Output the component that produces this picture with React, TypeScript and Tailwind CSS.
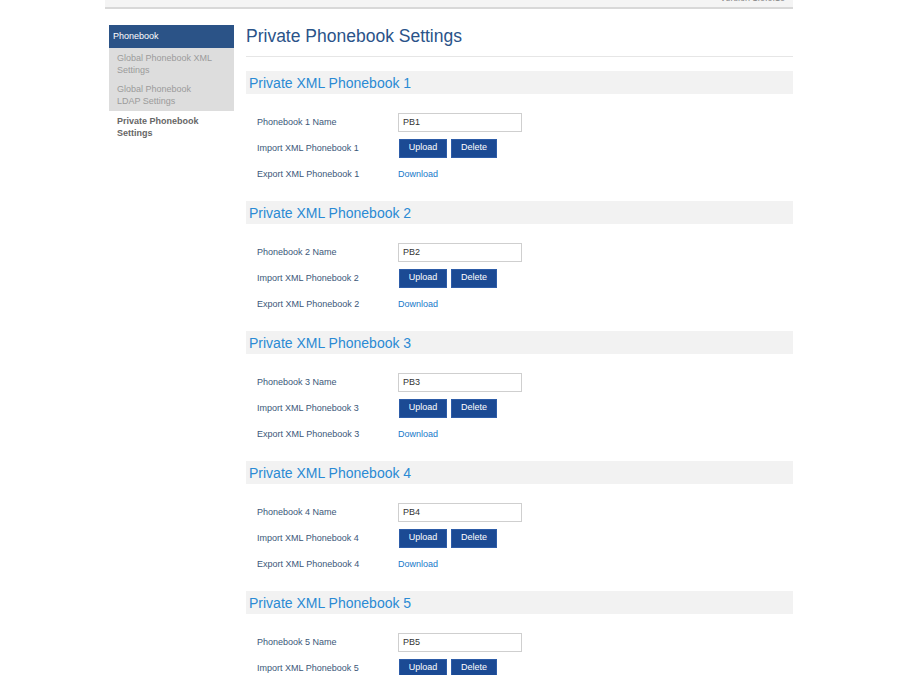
import React from 'react'

const books = [1, 2, 3, 4, 5]

function Section({ n }: { n: number }) {
  return (
    <div className="pb-[14px]">
      <div className="h-[23px] bg-[#f2f2f2] pl-[3px] text-[14px] leading-[24px] text-[#2a8ad4]">
        Private XML Phonebook {n}
      </div>
      <div className="pt-[15px] pl-[11px] text-[9px] text-[#3b5779]">
        <div className="flex h-[26px] items-center">
          <div className="w-[141px] pt-px">Phonebook {n} Name</div>
          <input
            defaultValue={`PB${n}`}
            className="h-[19px] w-[124px] border border-[#cfcfcf] px-[4px] text-[9px] text-[#333] outline-none"
          />
        </div>
        <div className="flex h-[26px] items-center">
          <div className="w-[141px] pt-px">Import XML Phonebook {n}</div>
          <div className="flex gap-[4px] pl-px">
            <button type="button" className="h-[19px] w-[48px] border border-[#2d5ca8] bg-[#1b4a94] text-[9px] text-white">
              Upload
            </button>
            <button type="button" className="h-[19px] w-[46px] border border-[#2d5ca8] bg-[#1b4a94] text-[9px] text-white">
              Delete
            </button>
          </div>
        </div>
        <div className="flex h-[26px] items-center">
          <div className="w-[141px] pt-px">Export XML Phonebook {n}</div>
          <a className="cursor-pointer pt-px text-[#2079c9]">Download</a>
        </div>
      </div>
    </div>
  )
}

export default function App() {
  return (
    <div className="min-h-screen bg-white font-['Liberation_Sans',Arial,sans-serif]">
      <div className="ml-[105px] w-[688px]">
        {/* top bar, mostly scrolled away */}
        <div className="flex h-[9px] justify-end overflow-hidden border-b-2 border-[#d8d8d8] bg-[#f4f4f4] pr-[8px]">
          <span className="-mt-[7px] text-[9px] leading-[11px] text-[#8a8a8a]">Version 1.0.0.10</span>
        </div>

        <div className="mt-[16px] flex">
          {/* sidebar */}
          <div className="ml-[4px] w-[125px] text-[9px]">
            <div className="h-[23px] bg-[#2b5387] pl-[4px] leading-[23px] text-white">Phonebook</div>
            <div className="bg-[#dddddd] pl-[8px] pr-[6px] pt-[3.5px] pb-[4px] leading-[12px] text-[#9b9b9b]">
              Global Phonebook XML Settings
            </div>
            <div className="bg-[#dddddd] pl-[8px] pr-[20px] pt-[3.5px] pb-[4px] leading-[12px] text-[#9b9b9b]">
              Global Phonebook LDAP Settings
            </div>
            <div className="pl-[8px] pr-[20px] pt-[3.5px] pb-[4px] font-bold leading-[12px] text-[#666]">
              Private Phonebook Settings
            </div>
          </div>

          {/* main */}
          <div className="ml-[12px] flex-1">
            <div className="border-b border-[#e6e6e6] pb-[9px] text-[17.5px] leading-[22px] text-[#2a5389]">
              Private Phonebook Settings
            </div>
            <div className="mt-[14px]">
              {books.map(n => (
                <Section key={n} n={n} />
              ))}
            </div>
          </div>
        </div>
      </div>
    </div>
  )
}
